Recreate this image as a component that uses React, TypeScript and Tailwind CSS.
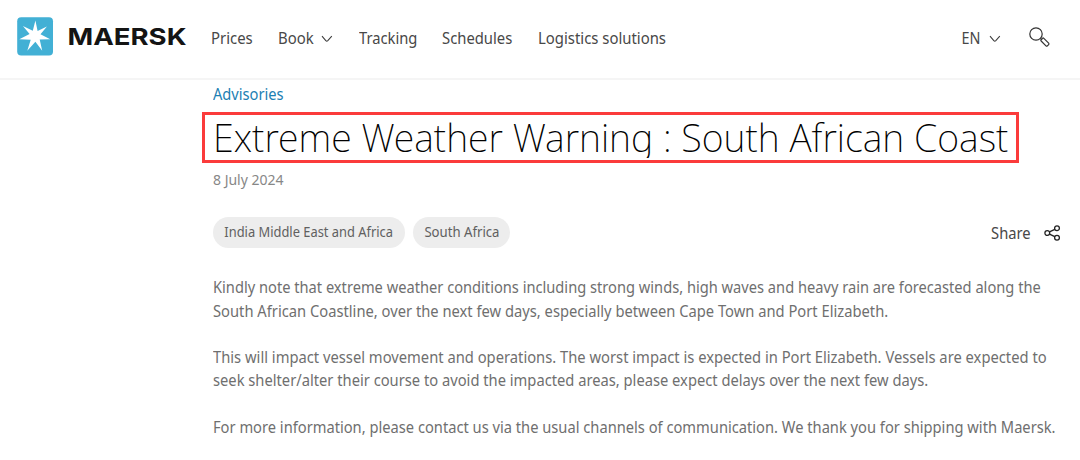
import clsx from "clsx";

const body = [
  [
    { text: "Kindly note that extreme weather conditions including strong winds, high waves and heavy rain are forecasted along the", fit: "scale-x-[0.945]" },
    { text: "South African Coastline, over the next few days, especially between Cape Town and Port Elizabeth.", fit: "scale-x-[0.950]" },
  ],
  [
    { text: "This will impact vessel movement and operations. The worst impact is expected in Port Elizabeth. Vessels are expected to", fit: "scale-x-[0.951]" },
    { text: "seek shelter/alter their course to avoid the impacted areas, please expect delays over the next few days.", fit: "scale-x-[0.949]" },
  ],
  [
    { text: "For more information, please contact us via the usual channels of communication. We thank you for shipping with Maersk.", fit: "scale-x-[0.947]" },
  ],
];

function Logo() {
  return (
    <svg width="172" height="40" viewBox="0 0 172 40" className="shrink-0">
      <rect x="0.2" y="1.2" width="35.8" height="38.4" rx="4" fill="#42b0d5" />
      <path
        d="M18.4 4.5l2.2 10.6 9.3-4.7-6.4 7.9 9.7 5-10.5.3 2.5 11.2-6.8-9.1-8.1 9 3.4-10.9-11.4-.6 10.3-5.2-6.7-8 9.9 4.8z"
        fill="#fff"
      />
      <text
        x="50.5"
        y="29"
        textLength="119"
        lengthAdjust="spacingAndGlyphs"
        fill="#141414"
        className="font-['Inter',sans-serif] text-[23.5px] font-bold"
      >
        MAERSK
      </text>
    </svg>
  );
}

function Chevron() {
  return (
    <svg width="12" height="8" viewBox="0 0 12 8" fill="none" stroke="#3c3c3c" strokeWidth="1.1">
      <path d="M1 1.2l3.8 4.4q1 1 2 0L10.8 1.2" />
    </svg>
  );
}

function SearchIcon() {
  return (
    <svg width="22" height="22" viewBox="0 0 22 22" fill="none" stroke="#333" strokeWidth="1.2">
      <circle cx="7" cy="7" r="6.2" />
      <path d="M11.5 11.5l1.6 1.4" />
      <rect x="11.5" y="13.2" width="8.8" height="3.8" rx="1" transform="rotate(45 15.9 15.1)" />
    </svg>
  );
}

function ShareIcon() {
  return (
    <svg width="17" height="16" viewBox="0 0 17 16" fill="none" stroke="#222" strokeWidth="1.3">
      <circle cx="3.3" cy="8" r="2.4" />
      <circle cx="13" cy="3.2" r="2.4" />
      <circle cx="13" cy="12.8" r="2.4" />
      <path d="M5.5 6.9l5.3-2.6M5.5 9.1l5.3 2.6" />
    </svg>
  );
}

export default function App() {
  return (
    <div className="h-[460px] w-[1080px] overflow-hidden bg-white font-['Noto_Sans',sans-serif]">
      <header className="flex h-20 items-start border-b-2 border-[#f5f5f5] pl-[17px] pt-4">
        <Logo />
        <nav className="ml-[22px] flex h-[46px] items-center whitespace-nowrap text-[15.5px] text-[#484848]">
          <a className="w-[67px]">
            <span className="inline-block origin-left scale-x-[0.96]">Prices</span>
          </a>
          <a className="flex w-[81px] items-center justify-between pr-[26px]">
            <span className="inline-block origin-left scale-x-[0.96]">Book</span> <Chevron />
          </a>
          <a className="w-[83px]">
            <span className="inline-block origin-left scale-x-[0.95]">Tracking</span>
          </a>
          <a className="w-24">
            <span className="inline-block origin-left scale-x-[0.955]">Schedules</span>
          </a>
          <a>
            <span className="inline-block origin-left scale-x-[0.96]">Logistics solutions</span>
          </a>
        </nav>
        <div className="ml-auto flex h-[46px] items-center pr-[29px] text-[15.5px] text-[#484848]">
          <span className="mr-[9px] origin-right scale-x-[0.93]">EN</span>
          <Chevron />
          <span className="mb-[3px] ml-7">
            <SearchIcon />
          </span>
        </div>
      </header>
      <main className="pl-[202px]">
        <a className="ml-[11px] block h-8 pt-[3px] text-[15.5px] leading-[22px] text-[#1c80b3]">
          <span className="inline-block origin-left scale-x-[0.945]">Advisories</span>
        </a>
        <div className="h-[51px] w-[817px] border-3 border-[#fb3b3b] pl-2">
          <h1 className="h-[43px] overflow-hidden whitespace-nowrap text-[38px] leading-[45px] font-extralight text-black">
            <span className="inline-block origin-left scale-x-[0.989]">Extreme Weather Warning : South African Coast</span>
          </h1>
        </div>
        <p className="ml-[11px] mt-[7px] text-[14px] leading-5 text-[#878787]">8 July 2024</p>
        <div className="ml-[11px] mt-[27px] flex h-[31px] items-center gap-2 pr-[19px] text-[14px] text-[#606060]">
          <span className="flex h-[31px] w-48 items-center justify-center rounded-full bg-[#ededed] pb-0.5 whitespace-nowrap">
            <span className="scale-x-[0.92]">India Middle East and Africa</span>
          </span>
          <span className="flex h-[31px] w-[97px] items-center justify-center rounded-full bg-[#ededed] pb-0.5 whitespace-nowrap">
            <span className="scale-x-[0.94]">South Africa</span>
          </span>
          <span className="ml-auto mr-[5px] mt-0.5 origin-right scale-x-[0.95] text-[15.5px] text-[#484848]">Share</span>
          <ShareIcon />
        </div>
        <article className="ml-[11px] mt-7 flex flex-col gap-[23.2px] pt-[0.3px] text-[15.5px] leading-[23.3px] text-[#6f6f6f]">
          {body.map((lines, i) => (
            <div key={i}>
              {lines.map((line) => (
                <p key={line.text} className={clsx("w-max origin-left whitespace-nowrap", line.fit)}>
                  {line.text}
                </p>
              ))}
            </div>
          ))}
        </article>
      </main>
    </div>
  );
}
